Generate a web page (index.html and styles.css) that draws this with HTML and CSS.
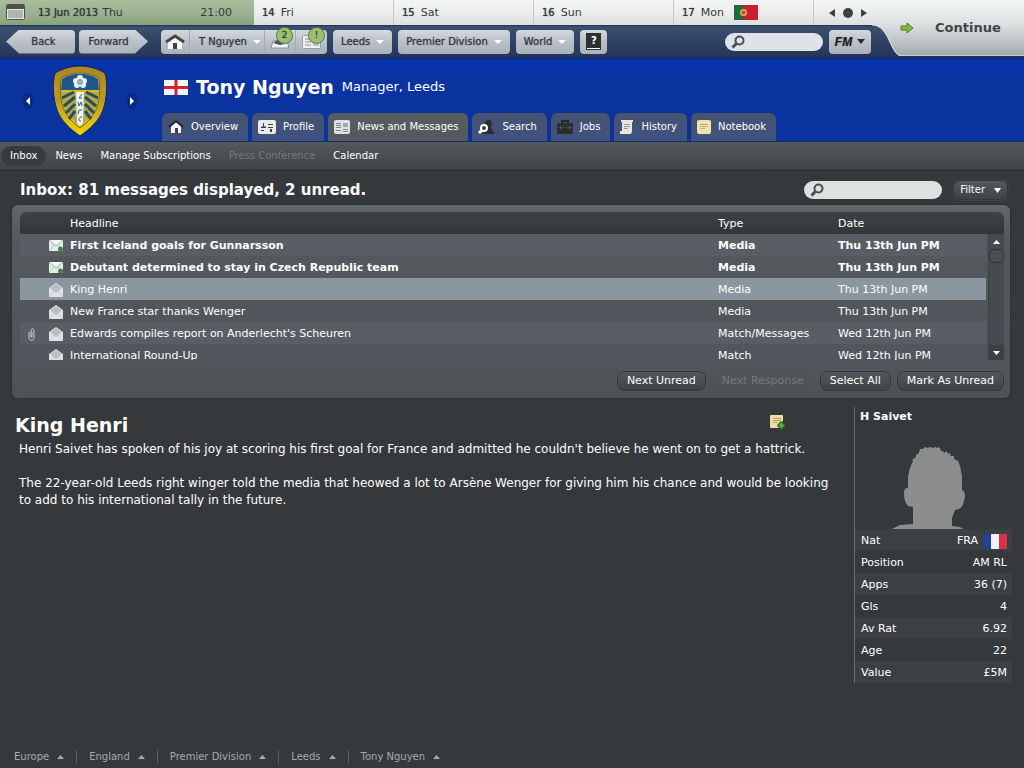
FILE: index.html
```html
<!DOCTYPE html>
<html lang="en">
<head>
<meta charset="utf-8">
<title>Inbox</title>
<meta name="viewport" content="width=device-width, initial-scale=1">
<link rel="stylesheet" href="styles.css">
</head>
<body>
<svg class="defs" aria-hidden="true">
  <defs>
    <linearGradient id="gold" x1="0" y1="0" x2="0" y2="1"><stop offset="0" stop-color="#a8862a"/><stop offset=".5" stop-color="#b99a25"/><stop offset="1" stop-color="#f2d80c"/></linearGradient>
    <symbol id="mag" viewBox="0 0 14 14"><circle cx="8.5" cy="5.5" r="4" fill="none" stroke="#4a4e50" stroke-width="2"/><path d="M5.5 8.5 1.5 12.5" stroke="#4a4e50" stroke-width="3"/></symbol>
    <symbol id="mail-new" viewBox="0 0 14 12"><path d="M0 0h14v11H0z" fill="#e6e9ea"/><path d="M0 0 7 6 14 0" fill="#f5f6f6" stroke="#a2a9ac"/><path d="M0 11 5 5M14 11 9 5" stroke="#bcc3c5"/><circle cx="11.500" cy="9" r="2.500" fill="#3f8149"/></symbol>
    <symbol id="mail-read" viewBox="0 0 14 14"><path d="M0 5 7 0l7 5v9H0z" fill="#dfe2e6"/><path d="M1 5 7 1l6 4-6 5z" fill="#bcc0c2"/><path d="M0 14 5 8M14 14 9 8" stroke="#c9cdd1"/></symbol>
  </defs>
</svg>

<header class="top">
  <div class="dates">
    <div class="day today">
      <svg width="20" height="17" viewBox="0 0 20 17"><rect x=".5" y=".5" width="18" height="15" rx="1" fill="#e4e8e2" stroke="#4b544b"/><path d="M1 1h17v4H1z" fill="#4a534a"/><path d="M2 7h15M2 9h15M2 11h15M2 13h15" stroke="#7d857d"/><path d="M4.500 6v8M7.500 6v8M10.500 6v8M13.500 6v8" stroke="#aab0a8"/></svg>
      <b>13 Jun 2013</b><span>Thu</span><time>21:00</time>
    </div>
    <div class="day"><b>14</b><span>Fri</span></div>
    <div class="day"><b>15</b><span>Sat</span></div>
    <div class="day"><b>16</b><span>Sun</span></div>
    <div class="day"><b>17</b><span>Mon</span>
      <svg width="24" height="15" viewBox="0 0 24 15"><path fill="#c8202c" d="M0 0h24v15H0z"/><path fill="#1c6b3c" d="M0 0h9v15H0z"/><circle cx="9.500" cy="7.500" r="3.500" fill="#d9b65a"/><circle cx="9.500" cy="7.500" r="2" fill="#c4453e"/></svg>
    </div>
    <div class="pager">
      <button aria-label="Previous days"><svg width="6" height="8"><path d="M6 0v8L0 4z" fill="#3c4244"/></svg></button>
      <button aria-label="Today"><svg width="10" height="10"><circle cx="5" cy="5" r="5" fill="#3c4244"/></svg></button>
      <button aria-label="Next days"><svg width="6" height="8"><path d="M0 0v8l6-4z" fill="#3c4244"/></svg></button>
    </div>
  </div>

  <nav class="tools">
    <div class="history">
      <button class="tool back">Back</button>
      <button class="tool forward">Forward</button>
    </div>
    <div class="group">
      <button class="tool" aria-label="Home"><svg width="20" height="16" viewBox="0 0 20 16"><path d="M3 8 10 3l7 5v7H3z" fill="#f7f9fa"/><path d="M8 9h4v6H8z" fill="#3d4145"/><path d="M1 8 10 2l9 6" fill="none" stroke="#42464a" stroke-width="3"/></svg></button>
      <button class="tool name">T Nguyen<svg width="8" height="4"><path d="M0 0h8L4 4z" fill="#fff"/></svg></button>
      <button class="tool alert" aria-label="2 alerts"><svg width="20" height="14" viewBox="0 0 20 14"><path d="M1 13 3 6h14l2 7z" fill="#f0f2f3" stroke="#8b9298"/><path d="M3 8 9 4l6 5-5 1z" fill="#4b5259"/></svg><i class="badge">2</i></button>
      <button class="tool alert" aria-label="Unread news"><svg width="20" height="14" viewBox="0 0 20 14"><rect x=".5" y=".5" width="18" height="13" rx="1" fill="#eef0f1" stroke="#989fa6"/><path d="M3 4h6M3 7h6M3 10h6M11 4h6M11 7h6M11 10h6" stroke="#8b9299"/></svg><i class="badge">!</i></button>
    </div>
    <button class="tool">Leeds<svg width="8" height="4"><path d="M0 0h8L4 4z" fill="#fff"/></svg></button>
    <button class="tool">Premier Division<svg width="8" height="4"><path d="M0 0h8L4 4z" fill="#fff"/></svg></button>
    <button class="tool">World<svg width="8" height="4"><path d="M0 0h8L4 4z" fill="#fff"/></svg></button>
    <button class="tool help" aria-label="Help"><span>?</span></button>
    <label class="search"><svg width="14" height="14"><use href="#mag"/></svg><input type="search" aria-label="Search the game"></label>
    <button class="tool fm">FM<svg width="8" height="5"><path d="M0 0h8L4 5z" fill="#25282b"/></svg></button>
  </nav>

  <button class="continue">
    <svg class="curve" viewBox="0 0 152 56" preserveAspectRatio="none">
      <defs><linearGradient id="steel" x1="0" y1="0" x2="0" y2="1"><stop offset="0" stop-color="#f3f5f5"/><stop offset=".4" stop-color="#dfe2e2"/><stop offset="1" stop-color="#a3abac"/></linearGradient></defs>
      <path d="M0 0h152v56H30C18 56 18 25 0 25z" fill="url(#steel)"/><path d="M0 25C18 25 18 56 30 56h122" fill="none" stroke="#e5e9eb"/>
    </svg>
    <svg class="go" width="14" height="12" viewBox="0 0 14 12"><path d="M1 4h6V1l6 5-6 5V8H1z" fill="#84b83c" stroke="#557d2c"/></svg>
    <span>Continue</span>
  </button>
</header>

<section class="banner">
  <div class="club">
    <button aria-label="Previous club"><svg width="4" height="8"><path d="M4 0v8L0 4z" fill="#fff"/></svg></button>
    <svg width="56" height="72" viewBox="0 0 56 72">
      <path d="M28 1C18 1 10 4 3 8 0 17 1 34 5 45c4 11 13 19 23 26 10-7 19-15 23-26 4-11 5-28 2-37-7-4-15-7-25-7z" fill="url(#gold)" stroke="#14204c"/>
      <path d="M28 8c-8 0-14 2-19 5-1 8-1 17 1 26 3 11 10 18 18 24 8-6 15-13 18-24 2-9 2-18 1-26-5-3-11-5-19-5z" fill="#d9bd1a" stroke="#6d6726"/>
      <path d="M28 9c-8 0-14 2-18 5l-1 11h38l-1-11c-4-3-10-5-18-5z" fill="#21558b"/>
      <path d="M9 27h38c0 6-2 13-5 18-3 6-8 11-14 16-6-5-11-10-14-16-3-5-5-12-5-18z" fill="#b3a548"/>
      <path d="M22 27 10 33M23 32 12 41M23 39l-9 9M23 46l-6 8M34 27l12 6M33 32l11 9M33 39l9 9M33 46l6 8" stroke="#264d62" stroke-width="3"/>
      <path d="M24 27h8l-1 29c0 6-6 6-6 0z" fill="#eef3ee"/>
      <path d="M30 29l-3 4h3M26 37l1 4 2-4 1 4M30 45h-3l-1 4M30 52c-4 0-4 5-1 4" stroke="#2b5ea0" fill="none"/>
      <g fill="#e7f0f2"><circle cx="28" cy="13" r="3"/><circle cx="32" cy="16" r="3"/><circle cx="31" cy="20" r="3"/><circle cx="25" cy="20" r="3"/><circle cx="24" cy="16" r="3"/></g><circle cx="28" cy="17" r="3" fill="#80a9c0"/><circle cx="28" cy="17" r="1" fill="#e4c820"/>
    </svg>
    <button aria-label="Next club"><svg width="4" height="8"><path d="M0 0v8l4-4z" fill="#fff"/></svg></button>
  </div>
  <div class="identity">
    <h1>
      <svg width="24" height="15" viewBox="0 0 24 15"><path fill="#f4f5f7" d="M0 0h24v15H0z"/><path d="M12 0v15M0 7.500h24" stroke="#d4242c" stroke-width="3"/></svg>
      Tony Nguyen <small>Manager, Leeds</small>
    </h1>
    <nav class="tabs">
      <a href="#"><svg width="16" height="16" viewBox="0 0 16 16"><path d="M3 7 8 3l5 4v7H3z" fill="#f7f9fa"/><path d="M7 9h3v5H7z" fill="#3a4048"/><path d="M1 8 8 2l7 6" fill="none" stroke="#23272d" stroke-width="2"/></svg>Overview</a>
      <a href="#"><svg width="18" height="14" viewBox="0 0 18 14"><rect width="18" height="14" rx="2" fill="#e8eaec"/><path d="M3 8h5V7L6 6V3H5v3L3 7zM10 4h5v1h-5zM10 7h5v1h-5zM3 10h3v1H3zM12 9h2v3h-2z" fill="#3d4248"/></svg>Profile</a>
      <a href="#" class="on"><svg width="16" height="14" viewBox="0 0 16 14"><rect width="16" height="14" rx="2" fill="#dde1e3"/><path d="M2 3.500h5M2 5.500h5M2 7.500h5M2 10.500h5M9 9.500h5M9 11.500h5" stroke="#7e868b"/><path d="M9 3h5v4H9z" fill="#a2a9ad"/></svg>News and Messages</a>
      <a href="#"><svg width="17" height="16" viewBox="0 0 17 16"><path d="M7 8V3l2-2h3l2 3-1 4 1 3 3 4H5z" fill="#292d33"/><circle cx="6" cy="9" r="3" fill="#3a3f49" stroke="#fff" stroke-width="2"/><path d="M4 11 1 14" stroke="#fff" stroke-width="3"/></svg>Search</a>
      <a href="#"><svg width="16" height="14" viewBox="0 0 16 14"><rect y="3" width="16" height="11" rx="1" fill="#2b2e2f"/><path d="M5 3V1h6v2" fill="none" stroke="#25282a" stroke-width="2"/><path d="M0 7.500h16" stroke="#3e4243"/><path d="M3 6h1v3H3zM12 6h1v3h-1z" fill="#5a5e5e"/></svg>Jobs</a>
      <a href="#"><svg width="14" height="14" viewBox="0 0 14 14"><path d="M1 0h12v2h-1v9l-1 3H0v-3h2V2H1z" fill="#e5e6e2"/><path d="M4 4.500h6M4 6.500h6M4 8.500h4" stroke="#969994"/></svg>History</a>
      <a href="#"><svg width="14" height="14" viewBox="0 0 14 14"><rect width="14" height="14" rx="2" fill="#f1e1ad"/><path d="M3 4.500h8M3 6.500h8M3 8.500h5" stroke="#c9b47c"/></svg>Notebook</a>
    </nav>
  </div>
</section>

<nav class="subnav">
  <a href="#" class="on">Inbox</a><a href="#">News</a><a href="#">Manage Subscriptions</a><a class="off" aria-disabled="true">Press Conference</a><a href="#">Calendar</a>
</nav>

<main>
  <div class="listbar">
    <h2>Inbox: 81 messages displayed, 2 unread.</h2>
    <label class="search wide"><svg width="14" height="14"><use href="#mag"/></svg><input type="search" aria-label="Search messages"></label>
    <button class="pill filter">Filter<svg width="7" height="5"><path d="M0 0h7L3.500 5z" fill="#fff"/></svg></button>
  </div>

  <section class="panel">
    <div class="list">
      <div class="clip">
        <table>
          <colgroup><col class="c-clip"><col class="c-icon"><col><col class="c-type"><col class="c-date"></colgroup>
          <thead><tr><th></th><th></th><th>Headline</th><th>Type</th><th>Date</th></tr></thead>
          <tbody>
            <tr class="unread alt"><td></td><td><svg width="14" height="12"><use href="#mail-new"/></svg></td><td>First Iceland goals for Gunnarsson</td><td>Media</td><td>Thu 13th Jun PM</td></tr>
            <tr class="unread"><td></td><td><svg width="14" height="12"><use href="#mail-new"/></svg></td><td>Debutant determined to stay in Czech Republic team</td><td>Media</td><td>Thu 13th Jun PM</td></tr>
            <tr class="sel"><td></td><td><svg width="14" height="14"><use href="#mail-read"/></svg></td><td>King Henri</td><td>Media</td><td>Thu 13th Jun PM</td></tr>
            <tr><td></td><td><svg width="14" height="14"><use href="#mail-read"/></svg></td><td>New France star thanks Wenger</td><td>Media</td><td>Thu 13th Jun PM</td></tr>
            <tr class="alt"><td><svg width="8" height="13" viewBox="0 0 8 13"><path d="M1 4v6c0 3 5 3 5 0V3c0-3-3-3-3 0v6h1V4" fill="none" stroke="#c9ced0"/></svg></td><td><svg width="14" height="14"><use href="#mail-read"/></svg></td><td>Edwards compiles report on Anderlecht's Scheuren</td><td>Match/Messages</td><td>Wed 12th Jun PM</td></tr>
            <tr><td></td><td><svg width="14" height="14"><use href="#mail-read"/></svg></td><td>International Round-Up</td><td>Match</td><td>Wed 12th Jun PM</td></tr>
          </tbody>
        </table>
      </div>
      <div class="gutter">
        <div class="scroll">
          <button aria-label="Scroll up"><svg width="7" height="4"><path d="M0 4h7L3.500 0z" fill="#fff"/></svg></button>
          <div class="thumb"></div>
          <button class="down" aria-label="Scroll down"><svg width="7" height="4"><path d="M0 0h7L3.500 4z" fill="#fff"/></svg></button>
        </div>
      </div>
    </div>
    <div class="actions">
      <button class="pill">Next Unread</button>
      <button class="pill" disabled>Next Response</button>
      <button class="pill">Select All</button>
      <button class="pill">Mark As Unread</button>
    </div>
  </section>

  <div class="reader">
    <article>
      <div class="head">
        <h2>King Henri</h2>
        <button aria-label="Add note"><svg width="15" height="15" viewBox="0 0 15 15"><rect width="13" height="13" rx="1" fill="#efdca6"/><path d="M3 3.500h8M3 5.500h8M3 7.500h5" stroke="#b8a26c"/><path d="M10 7h3v2h2v3h-2v2h-3v-2H8V9h2z" fill="#4cb33c" stroke="#17581d"/></svg></button>
      </div>
      <p>Henri Saivet has spoken of his joy at scoring his first goal for France and admitted he couldn't believe he went on to get a hattrick.</p>
      <p>The 22-year-old Leeds right winger told the media that heowed a lot to Arsène Wenger for giving him his chance and would be looking to add to his international tally in the future.</p>
    </article>
    <aside>
      <h3>H Saivet</h3>
      <svg class="face" width="76" height="82" viewBox="0 0 76 82"><path d="M1 82 9 78l13-1V60l-5-1c-3-3-4-8-4-13 0-3 1-5 4-5V29l2-8 3-7-1-1 4-3 0-2 3-2 1-4 3 0 2-2 3 1 2-1 3 1 2-1 2 1 1-1 2 1 1 3h2l1 2 3-2v2l4 1-1 2 4 0 0 3 4 2 2 5 2 10v14c2 1 3 3 3 6-1 6-2 11-6 13l-4 1-3 8v8l8 1 5 3z" fill="#8c8e8e"/></svg>
      <table>
        <tr><th>Nat</th><td><span class="nat">FRA<svg width="24" height="15" viewBox="0 0 24 15"><path fill="#f1f2f4" d="M0 0h24v15H0z"/><path fill="#22409c" d="M0 0h8v15H0z"/><path fill="#dd3040" d="M16 0h8v15h-8z"/></svg></span></td></tr>
        <tr><th>Position</th><td>AM RL</td></tr>
        <tr><th>Apps</th><td>36 (7)</td></tr>
        <tr><th>Gls</th><td>4</td></tr>
        <tr><th>Av Rat</th><td>6.92</td></tr>
        <tr><th>Age</th><td>22</td></tr>
        <tr><th>Value</th><td>£5M</td></tr>
      </table>
    </aside>
  </div>
</main>

<footer>
  <a href="#">Europe<svg width="7" height="4"><path d="M0 4h7L3.500 0z" fill="#a6aaab"/></svg></a>
  <a href="#">England<svg width="7" height="4"><path d="M0 4h7L3.500 0z" fill="#a6aaab"/></svg></a>
  <a href="#">Premier Division<svg width="7" height="4"><path d="M0 4h7L3.500 0z" fill="#a6aaab"/></svg></a>
  <a href="#">Leeds<svg width="7" height="4"><path d="M0 4h7L3.500 0z" fill="#a6aaab"/></svg></a>
  <a href="#">Tony Nguyen<svg width="7" height="4"><path d="M0 4h7L3.500 0z" fill="#a6aaab"/></svg></a>
</footer>
</body>
</html>
```
FILE: styles.css
```css
* { box-sizing: border-box; }
body {
  margin: 0;
  min-height: 100vh;
  display: flex;
  flex-direction: column;
  background: #36393c;
  color: #fff;
  font: 11px/16px "DejaVu Sans", sans-serif;
}
button { font: inherit; color: inherit; border: 0; padding: 0; background: none; cursor: pointer; }
a { color: inherit; text-decoration: none; }
svg { display: block; flex: none; }
h1, h2, h3, p { margin: 0; }
.defs { position: absolute; width: 0; height: 0; }

/* Date strip and toolbar */
.top {
  display: grid;
  grid-template: 25px 34px / minmax(0, 1fr) 152px;
  background: linear-gradient(#223352 25px, #3b506f 27px, #24365a 56px, #172a66 59px);
}
.dates {
  display: grid;
  grid-template-columns: 254fr repeat(4, 140fr) 58px;
  background: linear-gradient(#f3f5f5, #eceeed 50%, #dcdfde);
  color: #34393b;
}
.day {
  display: flex;
  align-items: center;
  gap: 6px;
  padding-left: 8px;
  border-right: 1px solid #c3c8c9;
}
.day b { font-size: 10px; font-weight: 400; text-shadow: 0 0 1px #34393b; }
.day svg { margin-left: 4px; }
.day.today { gap: 4px; padding: 0 22px 0 6px; background: linear-gradient(#a9bd9c, #9bb08e 60%, #87a07a); border: 0; }
.day.today svg { margin: 0 8px 0 0; }
.day.today time { margin-left: auto; }
.pager { display: flex; align-items: center; gap: 8px; padding-left: 15px; }
.tools { display: flex; align-items: center; gap: 6px; padding: 0 1px 1px 6px; }
.history, .group { display: flex; }
.history { gap: 4px; margin-right: 7px; }
.tool {
  position: relative;
  height: 24px;
  display: flex;
  align-items: center;
  justify-content: center;
  gap: 6px;
  padding: 0 8px;
  border-radius: 4px;
  background: linear-gradient(#d3d9dd, #b9c0c8 50%, #a9b1ba);
  color: #33383d;
  font-size: 10px;
  text-shadow: 0 0 1px #5a5f66;
}
.back { width: 69px; padding-left: 14px; clip-path: polygon(13px 0, 100% 0, 100% 100%, 13px 100%, 0 50%); }
.forward { width: 69px; padding-right: 18px; clip-path: polygon(0 0, 56px 0, 100% 50%, 56px 100%, 0 100%); }
.group .tool { border-radius: 0; border-right: 1px solid #a3abb4; padding: 0 4px; }
.group .tool:first-child { border-radius: 4px 0 0 4px; }
.group .tool:last-child { border-radius: 0 4px 4px 0; border: 0; }
.group .name { width: 75px; padding: 0 2px 0 8px; }
.group .alert { width: 31px; }
.badge {
  position: absolute;
  top: -3px;
  right: 2px;
  width: 17px;
  height: 17px;
  border: 1px solid #567442;
  border-radius: 50%;
  background: #9dbf72;
  color: #2c3a25;
  font: 9px/15px "DejaVu Sans", sans-serif;
}
.help span { width: 13px; height: 15px; background: #2c2f33; color: #fff; border-bottom: 1px solid #fff; outline: 1px solid #2c2f33; font: bold 10px/13px "DejaVu Sans", sans-serif; }
.help { padding: 0 7px; }
.fm { width: 42px; padding: 0; gap: 5px; font: italic 900 12px/24px "Liberation Sans", sans-serif; color: #1c1f22; }
.search { display: flex; align-items: center; width: 98px; height: 18px; padding: 0 6px; border-radius: 9px; background: #dfe2e6; }
.search input { flex: 1; min-width: 0; border: 0; outline: 0; background: none; font: inherit; }
.tools .search { margin-left: auto; }
.continue {
  grid-column: 2;
  grid-row: 1 / 3;
  position: relative;
  display: flex;
  align-items: center;
  gap: 21px;
  padding: 0 0 3px 28px;
  color: #3f4446;
  font-size: 13px;
  font-weight: 700;
}
.curve { position: absolute; inset: 0; width: 100%; height: 56px; }
.go, .continue span { position: relative; }

/* Club banner */
.banner { display: flex; height: 83px; background: linear-gradient(#0632ab, #0b33a0 30%, #0b33a0); border-bottom: 1px solid #123070; }
.club { width: 160px; display: flex; align-items: center; justify-content: center; gap: 18px; padding-top: 2px; margin-right: 2px; }
.club button { width: 12px; height: 16px; padding: 4px; border-radius: 50%; background: #0a2a86; }
.identity { flex: 1; display: flex; flex-direction: column; justify-content: space-between; }
.identity h1 { display: flex; align-items: center; gap: 8px; padding: 16px 0 0 2px; font-size: 19px; line-height: 24px; }
.identity small { font-size: 13px; font-weight: 400; }
.tabs { display: flex; gap: 4px; font-size: 10px; }
.tabs a {
  height: 28px;
  display: flex;
  align-items: center;
  gap: 7px;
  padding: 0 10px 0 6px;
  border-radius: 6px 6px 0 0;
  background: linear-gradient(#45536f, #3f5281);
  box-shadow: 0 0 2px #1a2f6a;
}
.tabs .on { background: linear-gradient(#575c5f, #55595b); box-shadow: none; }
.subnav { display: flex; align-items: center; height: 29px; padding: 0 1px; background: linear-gradient(#55595b, #3f4345); border-bottom: 1px solid #2a2d2f; font-size: 10px; }
.subnav a { padding: 2px 9px; border-radius: 10px; }
.subnav .on { background: #383b3d; }
.subnav .off { color: #75797a; }

/* Message list */
main { flex: 1; padding: 0 14px 0 12px; }
.listbar { display: flex; align-items: center; gap: 11px; height: 34px; padding: 4px 2px 0 8px; }
.listbar h2 { flex: 1; font-size: 15px; }
.wide { width: 138px; background: #dfe0e0; }
.pill {
  height: 20px;
  padding: 0 9px;
  border: 1px solid #33373a;
  border-radius: 7px;
  background: linear-gradient(#53585b, #3f4346);
  box-shadow: 0 0 1px #73787a;
}
.pill:disabled { color: #73797d; background: none; border-color: #4b5154; box-shadow: none; }
.filter { display: flex; align-items: center; gap: 9px; padding: 0 6px; font-size: 10px; }
.panel { padding: 7px 6px 7px 8px; border-radius: 6px; background: linear-gradient(#626769, #53585c 20%, #50565b 80%, #4d5354); box-shadow: 0 0 2px #1f2224; }
.list { display: flex; }
.clip { flex: 1; min-width: 0; height: 148px; overflow: hidden; border-radius: 6px 0 0 0; }
.list table { width: 100%; table-layout: fixed; border-collapse: collapse; }
.list tr { height: 22px; }
.list th, .list td { padding: 2px 0 0; text-align: left; font-weight: 400; white-space: nowrap; }
.list td:first-child svg { margin-left: 8px; }
.list thead { background: linear-gradient(#3e4244, #33373a); }
.list .alt { background: #585e64; }
.list .sel { background: #8b969e; }
.list .unread td { font-weight: 700; }
.c-clip { width: 29px; }
.c-icon { width: 21px; }
.c-type { width: 120px; }
.c-date { width: 148px; }
.gutter { width: 18px; padding: 22px 0 0 2px; border-radius: 0 6px 0 0; background: linear-gradient(#3e4244, #33373a 22px, transparent 22px); }
.scroll { height: 126px; display: flex; flex-direction: column; background: #464b4f; border-left: 1px solid #3b4043; }
.scroll button { height: 15px; display: grid; place-items: center; }
.thumb { height: 14px; border: 1px solid #2f3336; border-radius: 6px; background: #4b5053; }
.scroll .down { margin-top: auto; background: #3c4043; }
.actions { display: flex; justify-content: flex-end; gap: 6px; padding: 11px 0 0; }

/* Message and player card */
.reader { display: flex; justify-content: space-between; padding-top: 9px; }
article { flex: 1; padding: 6px 12px 0 3px; font-size: 12px; line-height: 17px; }
.head { display: flex; align-items: flex-start; justify-content: space-between; padding-right: 57px; margin-bottom: 4px; }
.head h2 { font-size: 19px; line-height: 24px; }
.head button { padding-top: 2px; }
article p { padding-left: 4px; margin-bottom: 17px; }
aside { width: 158px; margin-right: -2px; border-left: 1px solid #6a6d6f; }
aside h3 { padding: 2px 5px 0; font-size: 11px; }
.face { margin: 22px 0 0 36px; }
aside table { width: 100%; border-collapse: collapse; }
aside tr { height: 22px; }
aside tr:nth-child(odd) { background: #3d4043; }
aside th, aside td { padding: 2px 5px 0 6px; text-align: left; font-weight: 400; }
aside td { text-align: right; }
.nat { display: flex; align-items: center; justify-content: flex-end; gap: 5px; }

footer { display: flex; align-items: center; padding-left: 2px; height: 22px; font-size: 10px; color: #a6aaab; }
footer a { display: flex; align-items: center; gap: 8px; padding: 0 12px; border-right: 1px solid #5a5d5f; height: 14px; }
footer a:last-child { border: 0; }
```
